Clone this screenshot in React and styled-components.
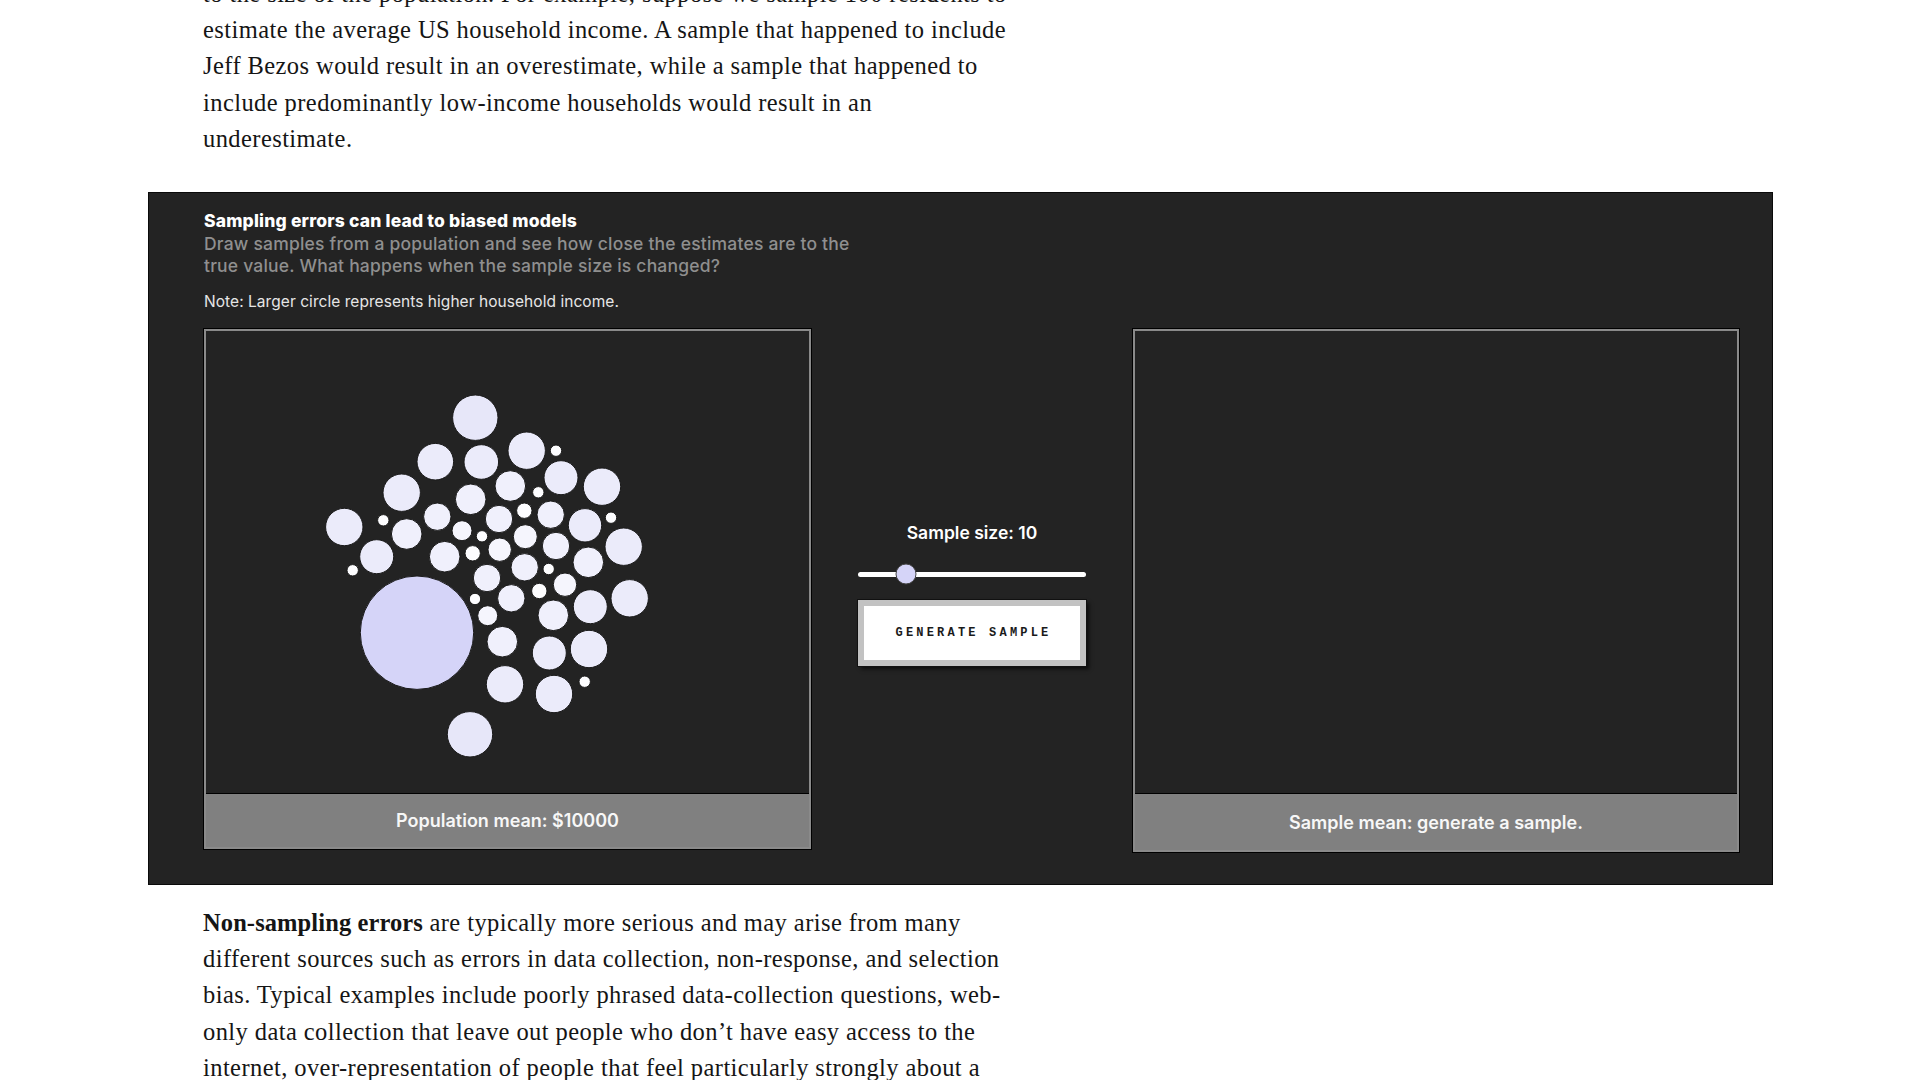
import React from 'react'
import styled, { createGlobalStyle } from 'styled-components'

const GlobalStyle = createGlobalStyle`
    html, body {
        margin: 0;
        padding: 0;
        background: #fff;
        overflow: hidden;
    }
`

// page coordinates of the population dots (x, y, r)
const dots = [
    [474.3, 417.7, 22.7], [434.3, 461.7, 18.3], [480.3, 462, 17.3], [525.7, 450.7, 18.7],
    [555, 450.7, 5.7], [400.7, 492.7, 18.7], [469.7, 499.3, 15.3], [509.3, 486, 15.3],
    [560, 477.7, 17], [601, 486.7, 18.7], [537.3, 492.3, 5.7], [343.3, 527, 18.7],
    [382.3, 520.3, 5.7], [436.3, 516.7, 13.7], [498, 519, 13.7], [523.3, 510.7, 7.7],
    [549.7, 514.7, 13.7], [584, 525.3, 16.7], [610, 517.7, 5.7], [405.7, 534, 15.3],
    [461, 530.7, 10], [481, 536.3, 5.7], [524.3, 536.7, 12], [555, 546, 13.7],
    [622.7, 546.7, 18.7], [375.7, 556.7, 17], [443.7, 556.7, 15.3], [471.7, 553.3, 7.7],
    [498.7, 549.7, 11.7], [587.3, 562.3, 15.3], [351.7, 570.3, 5.7], [486, 578, 13.7],
    [523.7, 567.3, 13.7], [547.7, 569, 5.7], [416, 632.7, 56.7], [474, 599, 5.7],
    [510.3, 598.3, 13.7], [538.3, 591, 7.7], [564, 584.7, 11.7], [589.3, 606.7, 17],
    [628.7, 598.3, 18.7], [486.7, 615.7, 10], [552.3, 615.3, 15.3], [501.3, 641.7, 15.3],
    [548.3, 653, 17], [588, 649, 18.7], [504, 684.3, 18.7], [553, 694, 18.7],
    [583.7, 681.7, 5.7], [469, 734.3, 22.7],
]

function dotFill(r) {
    if (r > 40) return '#d5d4f8'
    if (r >= 20) return '#e7e7f9'
    if (r >= 16) return '#ebebfa'
    if (r >= 13) return '#f0f0fc'
    if (r >= 9) return '#f5f5fd'
    return '#fdfdff'
}

function App() {
    return (
        <Page>
            <GlobalStyle />
            <Article>
                <Para $first>
                    to the size of the population. For example, suppose we sample 100 residents to<br />
                    estimate the average US household income. A sample that happened to include<br />
                    Jeff Bezos would result in an overestimate, while a sample that happened to<br />
                    include predominantly low-income households would result in an<br />
                    underestimate.
                </Para>
            </Article>

            <Panel>
                <Header>
                    <Title>Sampling errors can lead to biased models</Title>
                    <Subtitle>
                        Draw samples from a population and see how close the estimates are to the<br />
                        true value. What happens when the sample size is changed?
                    </Subtitle>
                    <Note>Note: Larger circle represents higher household income.</Note>
                </Header>
                <Board>
                    <PlotBox>
                        <PlotArea>
                            <svg width="100%" height="100%" viewBox="205 331 603 462">
                                {dots.map(([x, y, r], i) => (
                                    <circle key={i} cx={x} cy={y} r={r} fill={dotFill(r)} stroke="#1a1a1a" strokeWidth="1" />
                                ))}
                            </svg>
                        </PlotArea>
                        <Footer>Population mean: $10000</Footer>
                    </PlotBox>

                    <Controls>
                        <SizeLabel>Sample size: 10</SizeLabel>
                        <Track>
                            <Thumb style={{ left: '21%' }} />
                        </Track>
                        <GenerateButton>Generate sample</GenerateButton>
                    </Controls>

                    <PlotBox>
                        <PlotArea />
                        <Footer $tall>Sample mean: generate a sample.</Footer>
                    </PlotBox>
                </Board>
            </Panel>

            <Article>
                <Para>
                    <b>Non-sampling errors</b> are typically more serious and may arise from many<br />
                    different sources such as errors in data collection, non-response, and selection<br />
                    bias. Typical examples include poorly phrased data-collection questions, web-<br />
                    only data collection that leave out people who don’t have easy access to the<br />
                    internet, over-representation of people that feel particularly strongly about a<br />
                    subject, and responses that may not reflect a person’s true opinion.
                </Para>
            </Article>
        </Page>
    )
}

export default App

const Page = styled.div`
    width: 1920px;
    height: 1080px;
    overflow: hidden;
    background: #fff;
`

const Article = styled.div`
    padding-left: 203px;
    width: 900px;
`

const Para = styled.p`
    margin: ${p => (p.$first ? '-24px 0 0' : '0')};
    font-family: "Liberation Serif", "Times New Roman", serif;
    font-size: 24.5px;
    letter-spacing: 0.42px;
    line-height: 36.2px;
    color: #151515;
    white-space: nowrap;

    b{
        font-weight: 700;
        letter-spacing: 0.1px;
    }
`

const Panel = styled.section`
    margin: 35px 0 20px 148px;
    width: 1625px;
    box-sizing: border-box;
    padding: 17px 34px 32px 55px;
    background: #232323;
    border: 1px solid #0a0a0a;
    font-family: Inter, "Liberation Sans", Arial, sans-serif;
`

const Header = styled.div`
    display: flex;
    flex-direction: column;
`

const Title = styled.div`
    font-size: 17.5px;
    line-height: 22px;
    font-weight: 800;
    color: #fff;
    letter-spacing: 0.18px;
`

const Subtitle = styled.div`
    font-size: 17.5px;
    line-height: 22px;
    color: #8f8f8f;
    font-weight: 500;
    letter-spacing: 0.2px;
    margin-top: 1px;
`

const Note = styled.div`
    margin-top: 15px;
    font-size: 15.5px;
    line-height: 20px;
    color: #e6e6e6;
    letter-spacing: 0.05px;
`

const Board = styled.div`
    margin-top: 17px;
    display: grid;
    grid-template-columns: 607px 228px 606px;
    column-gap: 47px;
    align-items: start;
`

const PlotBox = styled.div`
    display: flex;
    flex-direction: column;
    border: 2px solid #8a8a8a;
    box-shadow: 0 0 0 1px #000;
`

const PlotArea = styled.div`
    height: 462px;
    background: #232323;
    border-bottom: 1px solid #000;

    svg{
        display: block;
    }
`

const Footer = styled.div`
    height: ${p => (p.$tall ? '56px' : '53px')};
    background: #808080;
    color: #f7f7f7;
    font-size: 18px;
    font-weight: 600;
    letter-spacing: 0;
    display: flex;
    align-items: center;
    justify-content: center;
`

const Controls = styled.div`
    align-self: stretch;
    display: flex;
    flex-direction: column;
    align-items: center;
    justify-content: center;
    padding-top: 7px;
`

const SizeLabel = styled.div`
    font-size: 17.5px;
    line-height: 20px;
    font-weight: 600;
    color: #fff;
    letter-spacing: 0;
`

const Track = styled.div`
    position: relative;
    margin-top: 29px;
    width: 228px;
    height: 5px;
    border-radius: 3px;
    background: #fff;
`

const Thumb = styled.div`
    position: absolute;
    top: 50%;
    width: 19px;
    height: 19px;
    border-radius: 50%;
    background: #d5d4f8;
    border: 1px solid #444;
    transform: translate(-50%, -50%);
`

const GenerateButton = styled.button`
    margin-top: 23px;
    width: 228px;
    height: 66px;
    box-sizing: border-box;
    background: #fff;
    border: 6px solid #c2c2c2;
    outline: 1px solid #111;
    box-shadow: 3px 3px 4px rgba(0,0,0,0.7);
    font-family: "Liberation Mono", "Courier New", monospace;
    font-size: 12px;
    font-weight: 700;
    letter-spacing: 3.2px;
    text-transform: uppercase;
    color: #1a1a1a;
    cursor: pointer;
    padding: 0 0 0 3px;
`
